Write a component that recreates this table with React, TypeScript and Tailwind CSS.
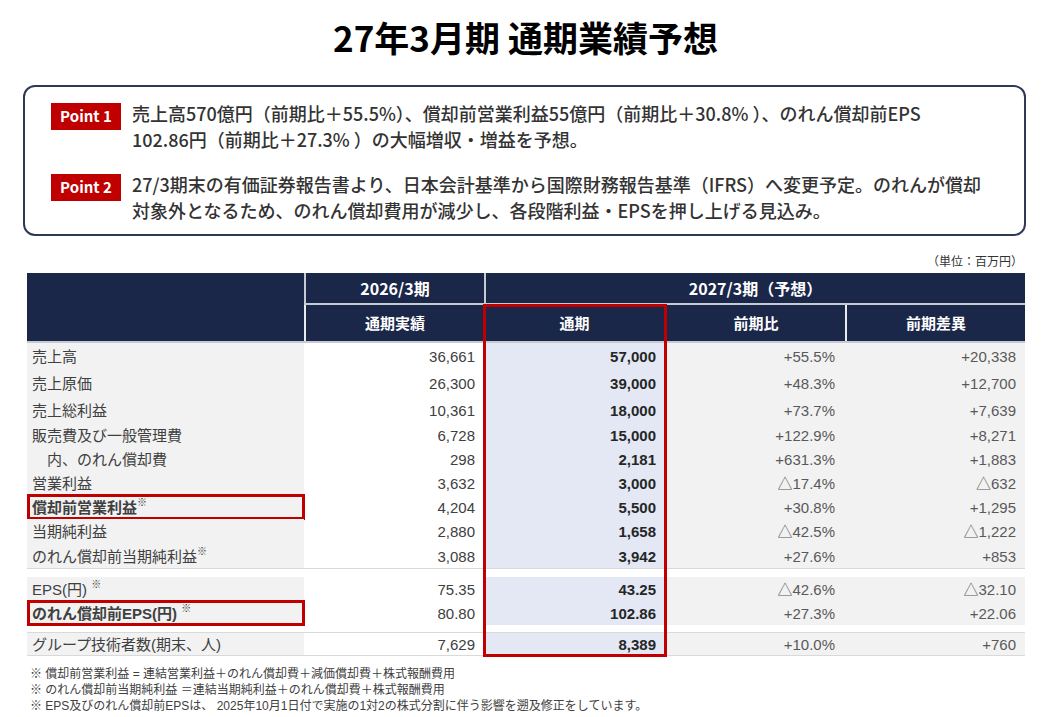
const navy = 'bg-[#1b2749]'

type Row = {
  label: string
  v: [string, string, string, string]
  h: string
  note?: string
  bold?: boolean
  box?: boolean
  indent?: boolean
}

const section1: Row[] = [
  { label: '売上高', v: ['36,661', '57,000', '+55.5%', '+20,338'], h: 'h-[26px]' },
  { label: '売上原価', v: ['26,300', '39,000', '+48.3%', '+12,700'], h: 'h-[28px]' },
  { label: '売上総利益', v: ['10,361', '18,000', '+73.7%', '+7,639'], h: 'h-[26px]' },
  { label: '販売費及び一般管理費', v: ['6,728', '15,000', '+122.9%', '+8,271'], h: 'h-[24px]' },
  { label: '内、のれん償却費', v: ['298', '2,181', '+631.3%', '+1,883'], h: 'h-[24px]', indent: true },
  { label: '営業利益', v: ['3,632', '3,000', '△17.4%', '△632'], h: 'h-[24px]' },
  { label: '償却前営業利益', v: ['4,204', '5,500', '+30.8%', '+1,295'], h: 'h-[24px]', note: '※', bold: true, box: true },
  { label: '当期純利益', v: ['2,880', '1,658', '△42.5%', '△1,222'], h: 'h-[25px]' },
  { label: 'のれん償却前当期純利益', v: ['3,088', '3,942', '+27.6%', '+853'], h: 'h-[24px]', note: '※' },
]

const section2: Row[] = [
  { label: 'EPS(円) ', v: ['75.35', '43.25', '△42.6%', '△32.10'], h: 'h-[24px]', note: '※' },
  { label: 'のれん償却前EPS(円) ', v: ['80.80', '102.86', '+27.3%', '+22.06'], h: 'h-[24px]', note: '※', bold: true, box: true },
]

const section3: Row[] = [
  { label: 'グループ技術者数(期末、人)', v: ['7,629', '8,389', '+10.0%', '+760'], h: 'h-[22px]' },
]

const cols = 'grid grid-cols-[277px_180px_181px_180px_180px]'

function DataRow({ r }: { r: Row }) {
  return (
    <div className={`${cols} ${r.h} text-[15px] leading-none`}>
      <div
        className={`relative flex items-center bg-[#f2f2f2] text-[#404040] ${r.indent ? 'pl-[20px]' : 'pl-[5px]'} ${r.bold ? 'font-bold text-[#262626]' : ''}`}
      >
        <span className="whitespace-pre">{r.label}</span>
        {r.note && <span className="-mt-[8px] text-[10px] font-normal text-[#404040]">{r.note}</span>}
        {r.box && <div className="absolute -top-px -bottom-px left-0 -right-px border-[3px] border-[#c00000]" />}
      </div>
      <div className="flex items-center justify-end bg-white pr-[9px] text-[#404040]">{r.v[0]}</div>
      <div className="flex items-center justify-end bg-[#e3e8f4] pr-[9px] font-bold text-[#262626]">{r.v[1]}</div>
      <div className="flex items-center justify-end bg-[#f2f2f2] pr-[10px] text-[#595959]">{r.v[2]}</div>
      <div className="flex items-center justify-end bg-[#f2f2f2] pr-[9px] text-[#595959]">{r.v[3]}</div>
    </div>
  )
}

function Point({ n, children }: { n: number; children: React.ReactNode }) {
  return (
    <div className="flex items-start">
      <div className="mt-[3px] flex h-[27px] w-[70px] shrink-0 items-center justify-center bg-[#c00000] text-[15px] font-bold text-white">
        Point {n}
      </div>
      <p className="ml-[11px] whitespace-nowrap text-[18px] font-medium leading-[26px] text-[#333333]">{children}</p>
    </div>
  )
}

export default function App() {
  return (
    <div
      className="h-[717px] w-[1051px] overflow-hidden bg-white"
      style={{ fontFamily: '"Liberation Sans", "Noto Sans CJK JP", sans-serif' }}
    >
      <h1
        className="pt-[17px] text-center text-[35px] font-bold leading-[40px] text-black"
        style={{ fontFamily: '"Noto Sans CJK JP", sans-serif' }}
      >
        27年3月期 通期業績予想
      </h1>

      {/* ポイント */}
      <div
        className="mx-[23px] mt-[28px] flex h-[151px] w-[1003px] flex-col gap-[19px] rounded-[12px] border-2 border-[#2e3a55] pl-[26px] pt-[13px]"
        style={{ fontFamily: '"Noto Sans CJK JP", sans-serif' }}
      >
        <Point n={1}>
          売上高570億円（前期比＋55.5%）、償却前営業利益55億円（前期比＋30.8% ）、のれん償却前EPS
          <br />
          102.86円（前期比＋27.3% ）の大幅増収・増益を予想。
        </Point>
        <Point n={2}>
          27/3期末の有価証券報告書より、日本会計基準から国際財務報告基準（IFRS）へ変更予定。のれんが償却
          <br />
          対象外となるため、のれん償却費用が減少し、各段階利益・EPSを押し上げる見込み。
        </Point>
      </div>

      <div className="mt-[18px] w-[1023px] text-right text-[12px] leading-[16px] text-[#333333]">（単位：百万円）</div>

      {/* 表 */}
      <div className="relative ml-[27px] mt-[3px] w-[998px]" style={{ fontFamily: '"Liberation Sans", "Noto Sans CJK JP", sans-serif' }}>
        <div className={`${cols} border-b-2 border-[#c6cad3] font-bold text-white`} style={{ fontFamily: '"Noto Sans CJK JP", sans-serif' }}>
          <div className={`${navy} row-span-2`} />
          <div className={`${navy} flex h-[32px] items-center justify-center border-b-2 border-l-2 border-[#c6cad3] text-[16px]`}>2026/3期</div>
          <div className={`${navy} col-span-3 flex h-[32px] items-center justify-center border-b-2 border-l-2 border-[#c6cad3] text-[16px]`}>
            2027/3期（予想）
          </div>
          <div className={`${navy} flex h-[36px] items-center justify-center border-l-2 border-[#e8eaee] text-[15px]`}>通期実績</div>
          <div className={`${navy} flex h-[36px] items-center justify-center text-[15px]`}>通期</div>
          <div className={`${navy} flex h-[36px] items-center justify-center border-l-2 border-[#e8eaee] text-[15px]`}>前期比</div>
          <div className={`${navy} flex h-[36px] items-center justify-center border-l-2 border-[#e8eaee] text-[15px]`}>前期差異</div>
        </div>

        <div className="border-b border-[#d9d9d9]">
          {section1.map((r) => (
            <DataRow key={r.label} r={r} />
          ))}
        </div>
        <div className="pt-[8px]">
          {section2.map((r) => (
            <DataRow key={r.label} r={r} />
          ))}
        </div>
        <div className="mt-[7px] border-y border-[#d9d9d9]">
          {section3.map((r) => (
            <DataRow key={r.label} r={r} />
          ))}
        </div>

        {/* 通期の赤枠 */}
        <div className="absolute left-[456px] top-[31px] h-[353px] w-[184px] border-[3px] border-[#c00000]" />
      </div>

      <div className="ml-[30px] mt-[10px] text-[12px] leading-[16px] text-[#404040]">
        <p>※ 償却前営業利益 = 連結営業利益＋のれん償却費＋減価償却費＋株式報酬費用</p>
        <p>※ のれん償却前当期純利益 ＝連結当期純利益＋のれん償却費＋株式報酬費用</p>
        <p>※ EPS及びのれん償却前EPSは、 2025年10月1日付で実施の1対2の株式分割に伴う影響を遡及修正をしています。</p>
      </div>
    </div>
  )
}
